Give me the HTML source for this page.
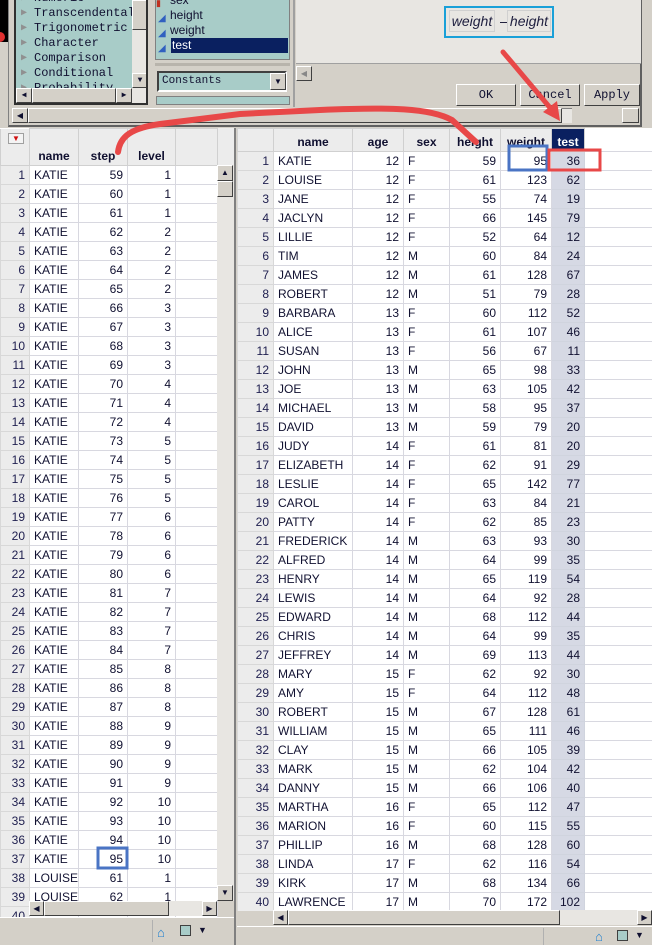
<!DOCTYPE html>
<html><head><meta charset="utf-8">
<style>
*{box-sizing:border-box;margin:0;padding:0}
body{width:652px;height:945px;overflow:hidden;background:#d4d0c8;position:relative;font-family:"Liberation Sans",sans-serif;font-size:12px;color:#101030}
.abs{position:absolute}
table{border-collapse:collapse;table-layout:fixed;background:#fff}
td{height:19px;border:1px solid #d8d8e0;padding:0 4px;white-space:nowrap;overflow:hidden;line-height:17px;background:#fff}
td.n{background:#ececec;text-align:right;color:#202050;border-color:#d8d8d8}
td.r{text-align:right}
td.t{background:#d6d9e4;border-color:#d0d4de}
.hd td{font-weight:bold;background:#ececec;border-color:#d0d0d0;text-align:center;vertical-align:bottom}
.mono{font-family:"Liberation Mono",monospace;font-size:12px}
.sb{background:#d4d0c8;border:1px solid #fff;border-right-color:#404040;border-bottom-color:#404040}
</style></head><body>
<!-- top dialog -->
<div class="abs" style="left:0;top:0;width:8px;height:42px;background:#000"></div>
<div class="abs" style="left:0;top:32px;width:5px;height:10px;background:#e03030;border-radius:0 5px 5px 0"></div>
<div class="abs" style="left:8px;top:0;width:634px;height:127px;background:#d4d0c8;border-left:1px solid #808080;border-bottom:2px solid #606060;border-right:2px solid #606060"></div>
<!-- function list -->
<div class="abs mono" style="left:14px;top:0;width:134px;height:105px;background:#a8ccc8;border:2px solid #303030;border-top:none;overflow:hidden">
<div style="position:absolute;left:18px;top:-9px;line-height:15px">Numeric<br>Transcendental<br>Trigonometric<br>Character<br>Comparison<br>Conditional<br>Probability</div>
<div style="position:absolute;left:5px;top:-9px;line-height:15px;color:#909090;font-size:10px">▶<br>▶<br>▶<br>▶<br>▶<br>▶<br>▶</div>
<div class="abs" style="left:116px;top:0;width:16px;height:88px;background:#e8e6e2"></div>
<div class="abs sb" style="left:116px;top:0;width:16px;height:30px"></div>
<div class="abs sb" style="left:116px;top:73px;width:16px;height:15px;font-size:8px;text-align:center;line-height:13px">▼</div>
<div class="abs" style="left:0;top:88px;width:132px;height:15px;background:#e8e6e2"></div>
<div class="abs sb" style="left:0;top:88px;width:16px;height:15px;font-size:8px;text-align:center;line-height:13px">◀</div>
<div class="abs sb" style="left:16px;top:88px;width:84px;height:15px"></div>
<div class="abs sb" style="left:100px;top:88px;width:16px;height:15px;font-size:8px;text-align:center;line-height:13px">▶</div>
</div>
<!-- variable list -->
<div class="abs" style="left:155px;top:0;width:135px;height:60px;background:#a8ccc8;border:1px solid #808080;border-top:none;overflow:hidden;line-height:15px;font-size:12px">
<div style="position:absolute;left:14px;top:-7px">sex<br>height<br>weight</div>
<div style="position:absolute;left:0;top:-4px;color:#c03020;font-size:9px">▮</div>
<div style="position:absolute;left:2px;top:11px;color:#3060c0;font-size:10px;line-height:15px">◢<br>◢<br>◢</div>
<div style="position:absolute;left:15px;top:38px;width:117px;height:15px;background:#0a2060;color:#fff;padding-left:1px">test</div>
</div>
<div class="abs" style="left:155px;top:63px;width:135px;height:3px;background:#b8b4ac"></div>
<div class="abs mono" style="left:157px;top:71px;width:130px;height:21px;background:#a8ccc8;border:2px solid #404040;border-right-color:#fff;border-bottom-color:#fff;line-height:17px;padding-left:3px;font-size:11px">Constants</div>
<div class="abs sb" style="left:270px;top:73px;width:16px;height:17px;font-size:8px;text-align:center;line-height:15px">▼</div>
<div class="abs" style="left:156px;top:96px;width:134px;height:9px;background:#a8ccc8;border:1px solid #808080"></div>
<div class="abs" style="left:293px;top:0;width:2px;height:107px;background:#a0a0a0"></div>
<!-- right pane -->
<div class="abs" style="left:296px;top:0;width:345px;height:64px;background:#e8e6e2;border-bottom:1px solid #a0a0a0"></div>
<div class="abs" style="left:444px;top:6px;width:110px;height:32px;border:2px solid #1aa0d8;background:#e8e6e2"></div>
<div class="abs" style="left:449px;top:10px;width:46px;height:22px;border:1px solid #d0d0d0;font-style:italic;font-size:14px;line-height:20px;text-align:center;color:#202040">weight</div>
<div class="abs" style="left:500px;top:10px;font-size:14px;line-height:22px">–</div>
<div class="abs" style="left:507px;top:10px;width:44px;height:22px;border:1px solid #d0d0d0;font-style:italic;font-size:14px;line-height:20px;text-align:center;color:#202040">height</div>
<div class="abs sb" style="left:296px;top:66px;width:16px;height:15px;color:#888;font-size:8px;text-align:center;line-height:13px">◀</div>
<div class="abs sb mono" style="left:456px;top:84px;width:60px;height:22px;text-align:center;line-height:20px">OK</div>
<div class="abs sb mono" style="left:520px;top:84px;width:60px;height:22px;text-align:center;line-height:20px">Cancel</div>
<div class="abs sb mono" style="left:584px;top:84px;width:56px;height:22px;text-align:center;line-height:20px">Apply</div>
<div class="abs" style="left:12px;top:108px;width:560px;height:15px;background:#e8e6e2;border-top:1px solid #808080"></div>
<div class="abs sb" style="left:12px;top:108px;width:16px;height:15px;font-size:8px;text-align:center;line-height:13px">◀</div>
<div class="abs sb" style="left:28px;top:108px;width:534px;height:15px"></div>
<div class="abs sb" style="left:622px;top:108px;width:17px;height:15px"></div>

<!-- left pane -->
<div class="abs" style="left:0;top:128px;width:236px;height:817px;background:#d4d0c8;border-right:2px solid #808080;overflow:hidden">
<div class="abs" style="left:0;top:0;width:234px;height:37px;background:#ececec"></div>
<table class="abs" style="left:0;top:0;width:217px">
<colgroup><col style="width:29px"><col style="width:49px"><col style="width:49px"><col style="width:48px"><col style="width:42px"></colgroup>
<tr class="hd"><td style="height:37px;border-top:none"></td><td>name</td><td>step</td><td>level</td><td></td></tr>
<tr><td class="n">1</td><td>KATIE</td><td class="r">59</td><td class="r">1</td><td></td></tr>
<tr><td class="n">2</td><td>KATIE</td><td class="r">60</td><td class="r">1</td><td></td></tr>
<tr><td class="n">3</td><td>KATIE</td><td class="r">61</td><td class="r">1</td><td></td></tr>
<tr><td class="n">4</td><td>KATIE</td><td class="r">62</td><td class="r">2</td><td></td></tr>
<tr><td class="n">5</td><td>KATIE</td><td class="r">63</td><td class="r">2</td><td></td></tr>
<tr><td class="n">6</td><td>KATIE</td><td class="r">64</td><td class="r">2</td><td></td></tr>
<tr><td class="n">7</td><td>KATIE</td><td class="r">65</td><td class="r">2</td><td></td></tr>
<tr><td class="n">8</td><td>KATIE</td><td class="r">66</td><td class="r">3</td><td></td></tr>
<tr><td class="n">9</td><td>KATIE</td><td class="r">67</td><td class="r">3</td><td></td></tr>
<tr><td class="n">10</td><td>KATIE</td><td class="r">68</td><td class="r">3</td><td></td></tr>
<tr><td class="n">11</td><td>KATIE</td><td class="r">69</td><td class="r">3</td><td></td></tr>
<tr><td class="n">12</td><td>KATIE</td><td class="r">70</td><td class="r">4</td><td></td></tr>
<tr><td class="n">13</td><td>KATIE</td><td class="r">71</td><td class="r">4</td><td></td></tr>
<tr><td class="n">14</td><td>KATIE</td><td class="r">72</td><td class="r">4</td><td></td></tr>
<tr><td class="n">15</td><td>KATIE</td><td class="r">73</td><td class="r">5</td><td></td></tr>
<tr><td class="n">16</td><td>KATIE</td><td class="r">74</td><td class="r">5</td><td></td></tr>
<tr><td class="n">17</td><td>KATIE</td><td class="r">75</td><td class="r">5</td><td></td></tr>
<tr><td class="n">18</td><td>KATIE</td><td class="r">76</td><td class="r">5</td><td></td></tr>
<tr><td class="n">19</td><td>KATIE</td><td class="r">77</td><td class="r">6</td><td></td></tr>
<tr><td class="n">20</td><td>KATIE</td><td class="r">78</td><td class="r">6</td><td></td></tr>
<tr><td class="n">21</td><td>KATIE</td><td class="r">79</td><td class="r">6</td><td></td></tr>
<tr><td class="n">22</td><td>KATIE</td><td class="r">80</td><td class="r">6</td><td></td></tr>
<tr><td class="n">23</td><td>KATIE</td><td class="r">81</td><td class="r">7</td><td></td></tr>
<tr><td class="n">24</td><td>KATIE</td><td class="r">82</td><td class="r">7</td><td></td></tr>
<tr><td class="n">25</td><td>KATIE</td><td class="r">83</td><td class="r">7</td><td></td></tr>
<tr><td class="n">26</td><td>KATIE</td><td class="r">84</td><td class="r">7</td><td></td></tr>
<tr><td class="n">27</td><td>KATIE</td><td class="r">85</td><td class="r">8</td><td></td></tr>
<tr><td class="n">28</td><td>KATIE</td><td class="r">86</td><td class="r">8</td><td></td></tr>
<tr><td class="n">29</td><td>KATIE</td><td class="r">87</td><td class="r">8</td><td></td></tr>
<tr><td class="n">30</td><td>KATIE</td><td class="r">88</td><td class="r">9</td><td></td></tr>
<tr><td class="n">31</td><td>KATIE</td><td class="r">89</td><td class="r">9</td><td></td></tr>
<tr><td class="n">32</td><td>KATIE</td><td class="r">90</td><td class="r">9</td><td></td></tr>
<tr><td class="n">33</td><td>KATIE</td><td class="r">91</td><td class="r">9</td><td></td></tr>
<tr><td class="n">34</td><td>KATIE</td><td class="r">92</td><td class="r">10</td><td></td></tr>
<tr><td class="n">35</td><td>KATIE</td><td class="r">93</td><td class="r">10</td><td></td></tr>
<tr><td class="n">36</td><td>KATIE</td><td class="r">94</td><td class="r">10</td><td></td></tr>
<tr><td class="n">37</td><td>KATIE</td><td class="r">95</td><td class="r">10</td><td></td></tr>
<tr><td class="n">38</td><td>LOUISE</td><td class="r">61</td><td class="r">1</td><td></td></tr>
<tr><td class="n">39</td><td>LOUISE</td><td class="r">62</td><td class="r">1</td><td></td></tr>
<tr><td class="n">40</td><td></td><td></td><td></td><td></td></tr>
</table>
<div class="abs" style="left:8px;top:5px;width:16px;height:11px;border:1px solid #a0a0a0;background:#f4f4f4;color:#d01010;font-size:8px;text-align:center;line-height:9px">▼</div>
<div class="abs" style="left:217px;top:37px;width:17px;height:736px;background:#e8e6e2"></div>
<div class="abs sb" style="left:217px;top:37px;width:16px;height:16px;font-size:8px;text-align:center;line-height:14px">▲</div>
<div class="abs sb" style="left:217px;top:53px;width:16px;height:16px"></div>
<div class="abs sb" style="left:217px;top:757px;width:16px;height:16px;font-size:8px;text-align:center;line-height:14px">▼</div>
<div class="abs" style="left:29px;top:773px;width:188px;height:15px;background:#e8e6e2"></div>
<div class="abs sb" style="left:29px;top:773px;width:15px;height:15px;font-size:8px;text-align:center;line-height:13px">◀</div>
<div class="abs sb" style="left:44px;top:773px;width:125px;height:15px"></div>
<div class="abs sb" style="left:202px;top:773px;width:15px;height:15px;font-size:8px;text-align:center;line-height:13px">▶</div>
<div class="abs" style="left:0;top:789px;width:234px;height:28px;background:#d4d0c8;border-top:1px solid #fff"></div>
<div class="abs" style="left:152px;top:792px;width:1px;height:22px;background:#b0b0b0"></div>
<div class="abs" style="left:157px;top:797px;color:#2080d0;font-size:13px">⌂</div>
<div class="abs" style="left:180px;top:797px;width:11px;height:11px;background:#a8ccc8;border:1px solid #404040"></div>
<div class="abs" style="left:198px;top:797px;font-size:9px">▼</div>
</div>

<!-- right pane -->
<div class="abs" style="left:237px;top:128px;width:415px;height:817px;background:#d4d0c8;overflow:hidden">
<div class="abs" style="left:0;top:0;width:415px;height:23px;background:#ececec"></div>
<table class="abs" style="left:0;top:0;width:415px">
<colgroup><col style="width:36px"><col style="width:79px"><col style="width:51px"><col style="width:46px"><col style="width:51px"><col style="width:51px"><col style="width:33px"><col style="width:68px"></colgroup>
<tr class="hd"><td style="height:23px"></td><td>name</td><td>age</td><td>sex</td><td>height</td><td>weight</td><td style="background:#0a2060;color:#fff">test</td><td style="background:#fff;border:none"></td></tr>
<tr><td class="n">1</td><td>KATIE</td><td class="r">12</td><td>F</td><td class="r">59</td><td class="r">95</td><td class="r t">36</td><td></td></tr>
<tr><td class="n">2</td><td>LOUISE</td><td class="r">12</td><td>F</td><td class="r">61</td><td class="r">123</td><td class="r t">62</td><td></td></tr>
<tr><td class="n">3</td><td>JANE</td><td class="r">12</td><td>F</td><td class="r">55</td><td class="r">74</td><td class="r t">19</td><td></td></tr>
<tr><td class="n">4</td><td>JACLYN</td><td class="r">12</td><td>F</td><td class="r">66</td><td class="r">145</td><td class="r t">79</td><td></td></tr>
<tr><td class="n">5</td><td>LILLIE</td><td class="r">12</td><td>F</td><td class="r">52</td><td class="r">64</td><td class="r t">12</td><td></td></tr>
<tr><td class="n">6</td><td>TIM</td><td class="r">12</td><td>M</td><td class="r">60</td><td class="r">84</td><td class="r t">24</td><td></td></tr>
<tr><td class="n">7</td><td>JAMES</td><td class="r">12</td><td>M</td><td class="r">61</td><td class="r">128</td><td class="r t">67</td><td></td></tr>
<tr><td class="n">8</td><td>ROBERT</td><td class="r">12</td><td>M</td><td class="r">51</td><td class="r">79</td><td class="r t">28</td><td></td></tr>
<tr><td class="n">9</td><td>BARBARA</td><td class="r">13</td><td>F</td><td class="r">60</td><td class="r">112</td><td class="r t">52</td><td></td></tr>
<tr><td class="n">10</td><td>ALICE</td><td class="r">13</td><td>F</td><td class="r">61</td><td class="r">107</td><td class="r t">46</td><td></td></tr>
<tr><td class="n">11</td><td>SUSAN</td><td class="r">13</td><td>F</td><td class="r">56</td><td class="r">67</td><td class="r t">11</td><td></td></tr>
<tr><td class="n">12</td><td>JOHN</td><td class="r">13</td><td>M</td><td class="r">65</td><td class="r">98</td><td class="r t">33</td><td></td></tr>
<tr><td class="n">13</td><td>JOE</td><td class="r">13</td><td>M</td><td class="r">63</td><td class="r">105</td><td class="r t">42</td><td></td></tr>
<tr><td class="n">14</td><td>MICHAEL</td><td class="r">13</td><td>M</td><td class="r">58</td><td class="r">95</td><td class="r t">37</td><td></td></tr>
<tr><td class="n">15</td><td>DAVID</td><td class="r">13</td><td>M</td><td class="r">59</td><td class="r">79</td><td class="r t">20</td><td></td></tr>
<tr><td class="n">16</td><td>JUDY</td><td class="r">14</td><td>F</td><td class="r">61</td><td class="r">81</td><td class="r t">20</td><td></td></tr>
<tr><td class="n">17</td><td>ELIZABETH</td><td class="r">14</td><td>F</td><td class="r">62</td><td class="r">91</td><td class="r t">29</td><td></td></tr>
<tr><td class="n">18</td><td>LESLIE</td><td class="r">14</td><td>F</td><td class="r">65</td><td class="r">142</td><td class="r t">77</td><td></td></tr>
<tr><td class="n">19</td><td>CAROL</td><td class="r">14</td><td>F</td><td class="r">63</td><td class="r">84</td><td class="r t">21</td><td></td></tr>
<tr><td class="n">20</td><td>PATTY</td><td class="r">14</td><td>F</td><td class="r">62</td><td class="r">85</td><td class="r t">23</td><td></td></tr>
<tr><td class="n">21</td><td>FREDERICK</td><td class="r">14</td><td>M</td><td class="r">63</td><td class="r">93</td><td class="r t">30</td><td></td></tr>
<tr><td class="n">22</td><td>ALFRED</td><td class="r">14</td><td>M</td><td class="r">64</td><td class="r">99</td><td class="r t">35</td><td></td></tr>
<tr><td class="n">23</td><td>HENRY</td><td class="r">14</td><td>M</td><td class="r">65</td><td class="r">119</td><td class="r t">54</td><td></td></tr>
<tr><td class="n">24</td><td>LEWIS</td><td class="r">14</td><td>M</td><td class="r">64</td><td class="r">92</td><td class="r t">28</td><td></td></tr>
<tr><td class="n">25</td><td>EDWARD</td><td class="r">14</td><td>M</td><td class="r">68</td><td class="r">112</td><td class="r t">44</td><td></td></tr>
<tr><td class="n">26</td><td>CHRIS</td><td class="r">14</td><td>M</td><td class="r">64</td><td class="r">99</td><td class="r t">35</td><td></td></tr>
<tr><td class="n">27</td><td>JEFFREY</td><td class="r">14</td><td>M</td><td class="r">69</td><td class="r">113</td><td class="r t">44</td><td></td></tr>
<tr><td class="n">28</td><td>MARY</td><td class="r">15</td><td>F</td><td class="r">62</td><td class="r">92</td><td class="r t">30</td><td></td></tr>
<tr><td class="n">29</td><td>AMY</td><td class="r">15</td><td>F</td><td class="r">64</td><td class="r">112</td><td class="r t">48</td><td></td></tr>
<tr><td class="n">30</td><td>ROBERT</td><td class="r">15</td><td>M</td><td class="r">67</td><td class="r">128</td><td class="r t">61</td><td></td></tr>
<tr><td class="n">31</td><td>WILLIAM</td><td class="r">15</td><td>M</td><td class="r">65</td><td class="r">111</td><td class="r t">46</td><td></td></tr>
<tr><td class="n">32</td><td>CLAY</td><td class="r">15</td><td>M</td><td class="r">66</td><td class="r">105</td><td class="r t">39</td><td></td></tr>
<tr><td class="n">33</td><td>MARK</td><td class="r">15</td><td>M</td><td class="r">62</td><td class="r">104</td><td class="r t">42</td><td></td></tr>
<tr><td class="n">34</td><td>DANNY</td><td class="r">15</td><td>M</td><td class="r">66</td><td class="r">106</td><td class="r t">40</td><td></td></tr>
<tr><td class="n">35</td><td>MARTHA</td><td class="r">16</td><td>F</td><td class="r">65</td><td class="r">112</td><td class="r t">47</td><td></td></tr>
<tr><td class="n">36</td><td>MARION</td><td class="r">16</td><td>F</td><td class="r">60</td><td class="r">115</td><td class="r t">55</td><td></td></tr>
<tr><td class="n">37</td><td>PHILLIP</td><td class="r">16</td><td>M</td><td class="r">68</td><td class="r">128</td><td class="r t">60</td><td></td></tr>
<tr><td class="n">38</td><td>LINDA</td><td class="r">17</td><td>F</td><td class="r">62</td><td class="r">116</td><td class="r t">54</td><td></td></tr>
<tr><td class="n">39</td><td>KIRK</td><td class="r">17</td><td>M</td><td class="r">68</td><td class="r">134</td><td class="r t">66</td><td></td></tr>
<tr><td class="n">40</td><td>LAWRENCE</td><td class="r">17</td><td>M</td><td class="r">70</td><td class="r">172</td><td class="r t">102</td><td></td></tr>
</table>
<div class="abs" style="left:0;top:783px;width:36px;height:34px;background:#d4d0c8"></div>
<div class="abs" style="left:36px;top:782px;width:379px;height:15px;background:#e8e6e2"></div>
<div class="abs sb" style="left:36px;top:782px;width:15px;height:15px;font-size:8px;text-align:center;line-height:13px">◀</div>
<div class="abs sb" style="left:51px;top:782px;width:272px;height:15px"></div>
<div class="abs sb" style="left:400px;top:782px;width:15px;height:15px;font-size:8px;text-align:center;line-height:13px">▶</div>
<div class="abs" style="left:0;top:798px;width:415px;height:19px;background:#d4d0c8;border-top:1px solid #fff"></div>
<div class="abs" style="left:306px;top:800px;width:1px;height:17px;background:#b0b0b0"></div>
<div class="abs" style="left:358px;top:801px;color:#2080d0;font-size:13px">⌂</div>
<div class="abs" style="left:380px;top:802px;width:11px;height:11px;background:#a8ccc8;border:1px solid #404040"></div>
<div class="abs" style="left:398px;top:802px;font-size:9px">▼</div>
</div>

<!-- annotations -->
<svg class="abs" style="left:0;top:0" width="652" height="945">
<path d="M118,152 C120,136 132,128 160,124 L240,114 L320,110 C390,107 430,108 452,120 L476,142" fill="none" stroke="#e84848" stroke-width="6" stroke-linecap="round"/>
<line x1="503" y1="52" x2="552" y2="110" stroke="#e84848" stroke-width="5" stroke-linecap="round"/>
<polygon points="560,121 543,112 557,101" fill="#e84848"/>
<rect x="509" y="146" width="38" height="24" fill="none" stroke="#4a74c4" stroke-width="3"/>
<rect x="549" y="150" width="51" height="20" fill="none" stroke="#e84848" stroke-width="3"/>
<rect x="98" y="848" width="29" height="20" fill="none" stroke="#4a74c4" stroke-width="3"/>
</svg>
</body></html>
